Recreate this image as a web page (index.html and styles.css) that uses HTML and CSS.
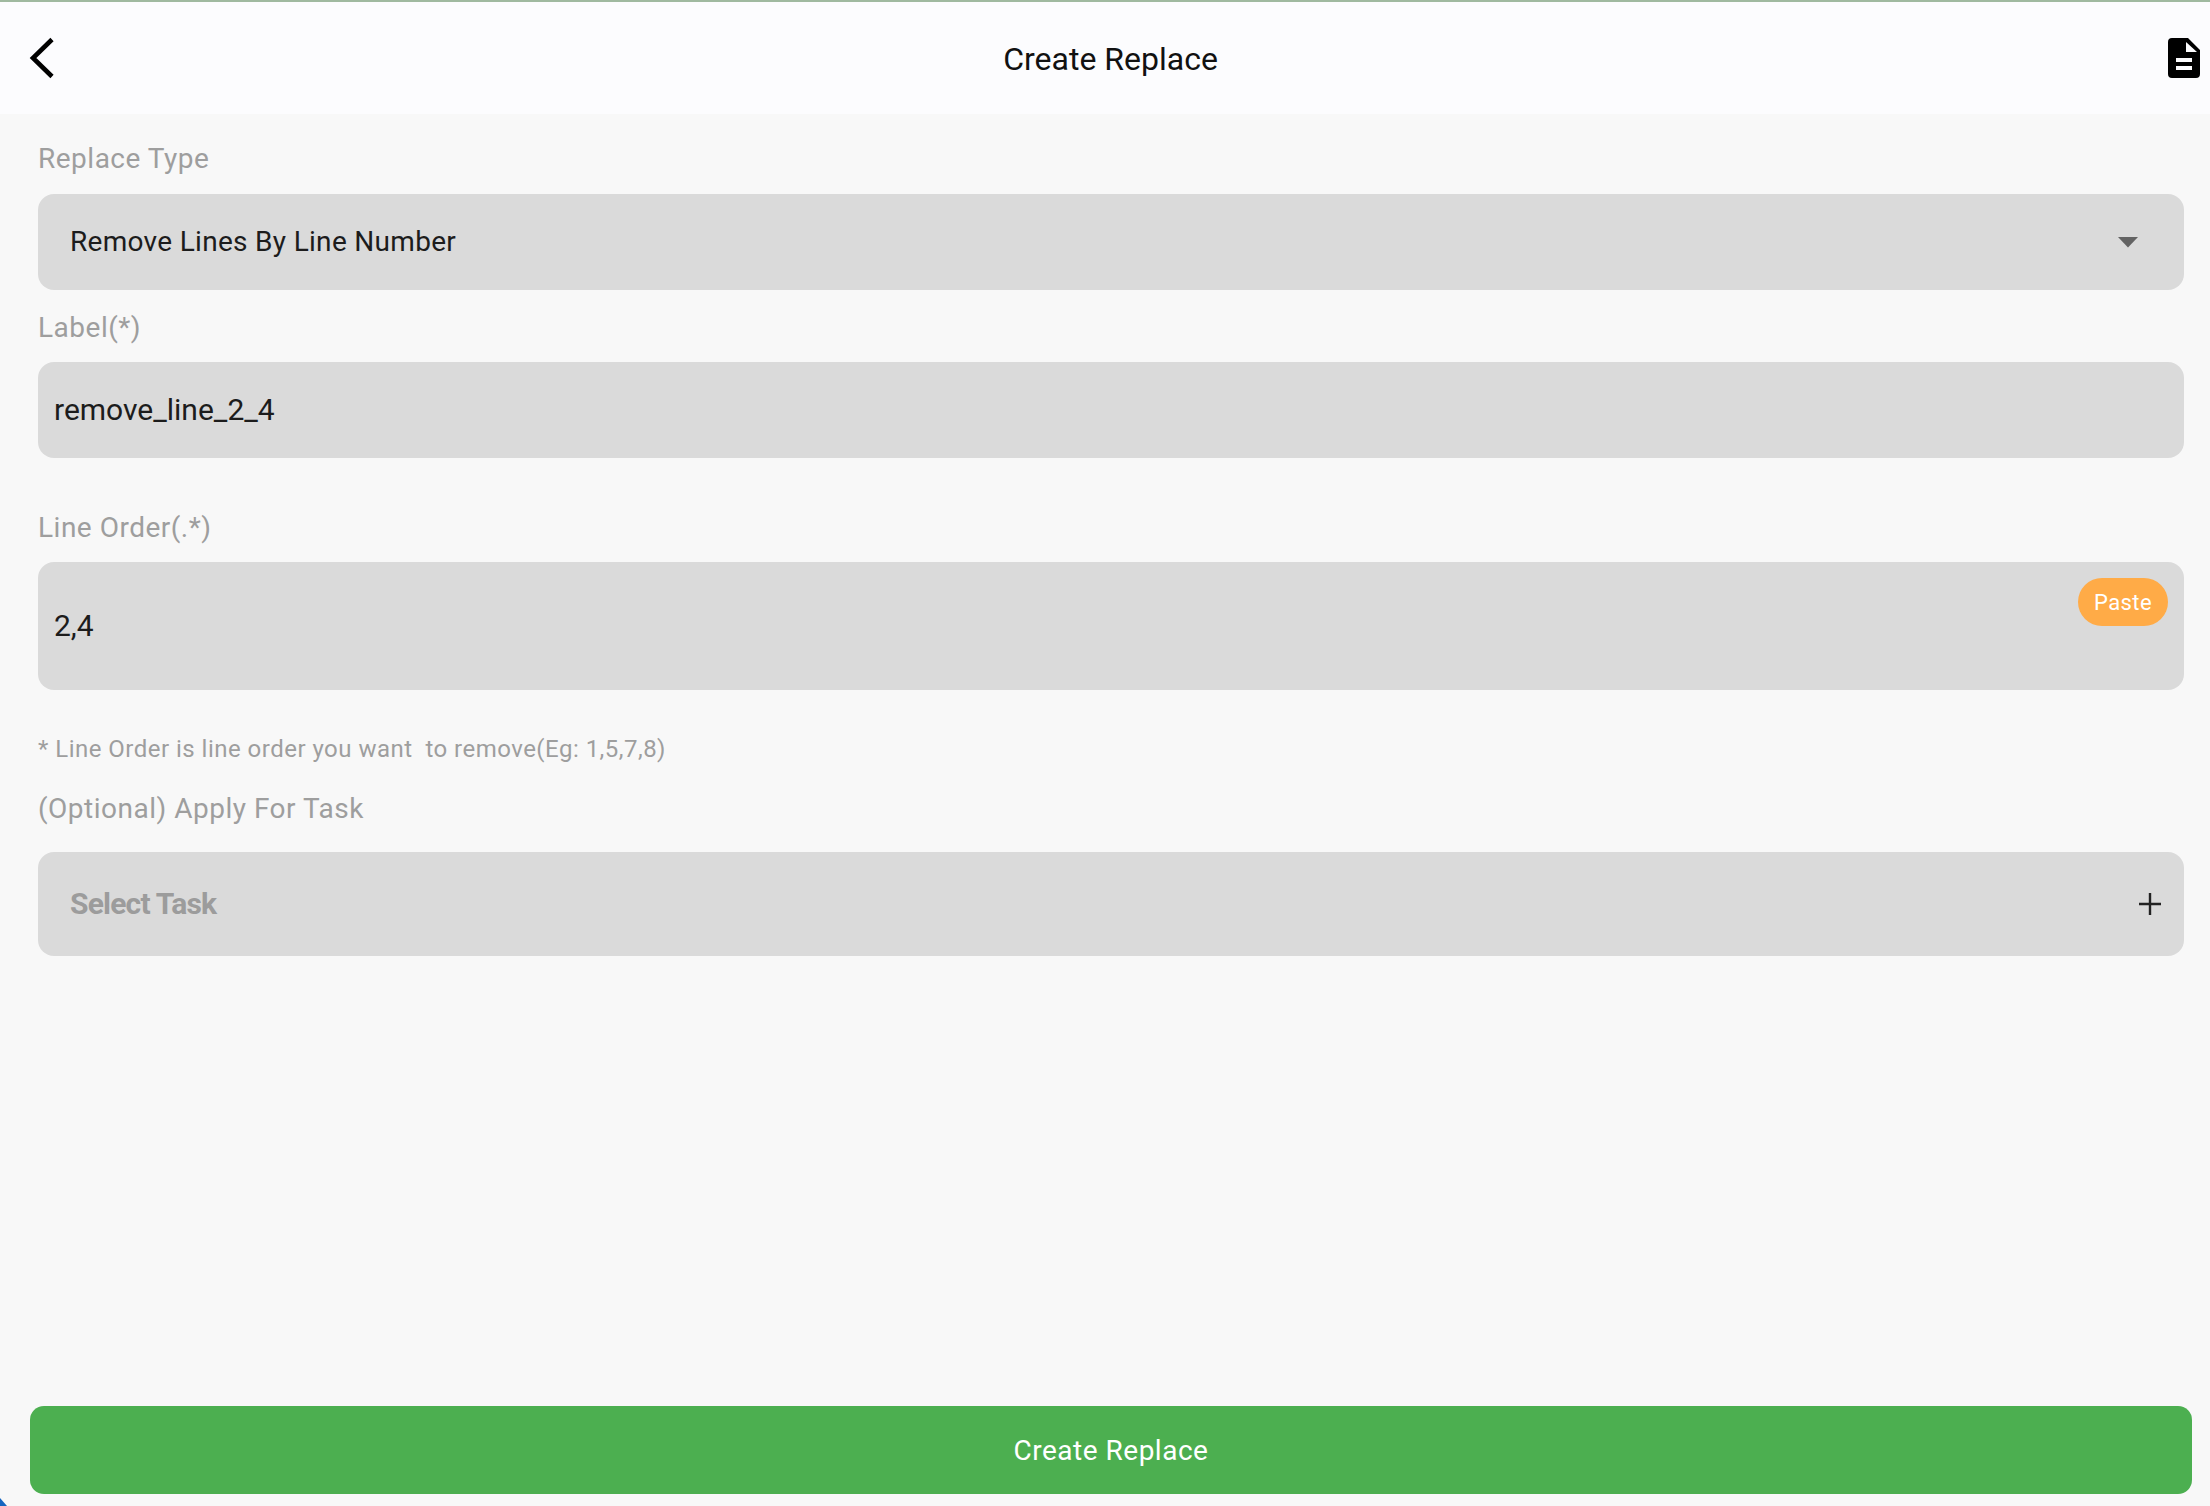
FILE: index.html
```html
<!DOCTYPE html>
<html lang="en">
<head>
<meta charset="utf-8">
<title>Create Replace</title>
<link rel="stylesheet" href="styles.css">
</head>
<body>
<div class="app">
  <header class="topbar">
    <svg class="back" width="30" height="42" viewBox="0 0 30 42"><path d="M25 2.5 L6 21 L25 39.5" fill="none" stroke="#000" stroke-width="4.6"/></svg>
    <h1 class="title">Create Replace</h1>
    <svg class="doc" width="32" height="40" viewBox="0 0 32 40"><path fill-rule="evenodd" d="M4 0H20L32 12V36a4 4 0 0 1-4 4H4a4 4 0 0 1-4-4V4a4 4 0 0 1 4-4ZM18 4V14H29L18 4ZM8 20V24H24V20H8ZM8 28V32H24V28H8Z" fill="#000"/></svg>
  </header>
  <main class="form">
    <div class="label label-first">Replace Type</div>
    <div class="field field-select">
      <span class="value value-select">Remove Lines By Line Number</span>
      <svg class="caret" width="20" height="11" viewBox="0 0 20 11"><path d="M0 0H20L10 10.5Z" fill="#636363"/></svg>
    </div>
    <div class="label label-second">Label(*)</div>
    <div class="field field-text"><span class="value">remove_line_2_4</span></div>
    <div class="label label-third">Line Order(.*)</div>
    <div class="field field-lines">
      <span class="value">2,4</span>
      <span class="paste">Paste</span>
    </div>
    <div class="hint">* Line Order is line order you want&nbsp; to remove(Eg: 1,5,7,8)</div>
    <div class="label label-fourth">(Optional) Apply For Task</div>
    <div class="field field-task">
      <span class="placeholder">Select Task</span>
      <svg class="plus" width="22" height="22" viewBox="0 0 22 22"><path d="M11 0V22M0 11H22" stroke="#222" stroke-width="2.4" fill="none"/></svg>
    </div>
  </main>
  <footer class="footer">
    <div class="submit">Create Replace</div>
  </footer>
  <div class="corner"></div>
</div>
</body>
</html>
```
FILE: styles.css
```css
* { box-sizing: border-box; }
html, body { margin: 0; padding: 0; }
body { font-family: Roboto, "Noto Sans", sans-serif; background: #f8f8f8; }
.app { position: relative; width: 2210px; height: 1506px; display: flex; flex-direction: column; overflow: hidden; background: #f8f8f8; }
.topbar { height: 114px; flex: none; background: #fcfcfe; border-top: 2px solid #a0b9a0; display: flex; align-items: center; justify-content: space-between; padding: 0 10px 0 27px; position: relative; }
.title { position: absolute; left: 0; right: 0; top: 36px; margin: 0; padding-left: 11px; text-align: center; font-size: 32px; line-height: 42px; font-weight: 400; color: #111; }
.back { display: block; margin-top: -1px; }
.doc { display: block; }
.form { flex: 1; padding: 0 26px 0 38px; display: flex; flex-direction: column; }
.label { font-size: 28px; line-height: 34px; letter-spacing: 0.5px; color: #9e9e9e; }
.label-first { margin-top: 28px; }
.label-second { margin-top: 21px; }
.label-third { margin-top: 53px; }
.label-fourth { margin-top: 28px; }
.field { background: #dadada; border-radius: 16px; display: flex; align-items: center; position: relative; }
.field-select { height: 96px; margin-top: 18px; padding: 0 46px 0 32px; justify-content: space-between; }
.field-text { height: 96px; margin-top: 17px; padding: 0 16px; }
.field-lines { height: 128px; margin-top: 17px; padding: 0 16px; }
.field-task { height: 104px; margin-top: 26px; padding: 0 23px 0 32px; justify-content: space-between; }
.value { font-size: 30px; line-height: 34px; color: #1c1c1c; }
.value-select { font-size: 28px; letter-spacing: 0.3px; }
.placeholder { font-size: 30px; line-height: 36px; font-weight: 700; color: #9c9c9c; letter-spacing: -0.8px; }
.caret { display: block; }
.plus { display: block; }
.paste { position: absolute; top: 16px; right: 16px; width: 90px; height: 48px; border-radius: 24px; background: #ffab47; color: #fff; font-size: 22px; line-height: 49px; letter-spacing: 0.4px; text-align: center; font-weight: 400; }
.hint { margin-top: 44px; font-size: 24px; line-height: 30px; letter-spacing: 0.48px; color: #9e9e9e; }
.footer { flex: none; padding: 0 18px 12px 30px; }
.submit { height: 88px; border-radius: 14px; background: #4caf50; color: #fff; font-size: 28px; line-height: 90px; letter-spacing: 0.5px; text-align: center; font-weight: 400; }
.corner { position: absolute; left: 0; bottom: 0; width: 7px; height: 8px; background: #1565c0; clip-path: polygon(0 0, 100% 100%, 0 100%); }
```
